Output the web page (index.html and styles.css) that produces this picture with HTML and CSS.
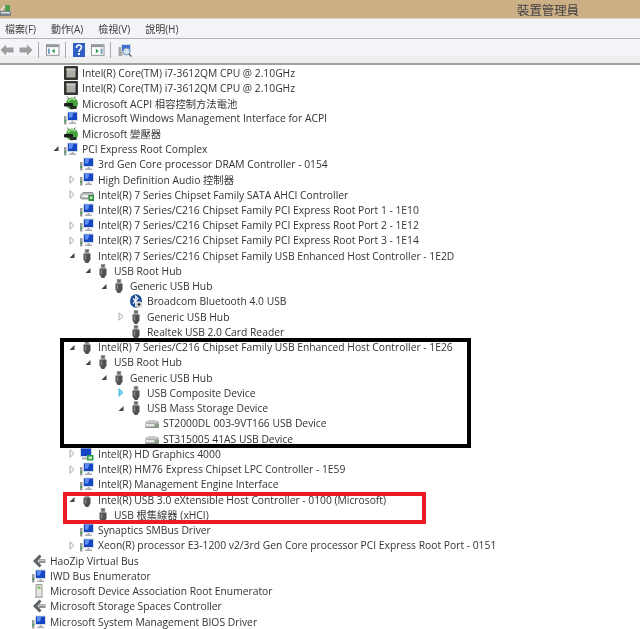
FILE: index.html
```html
<!DOCTYPE html>
<html lang="zh-Hant">
<head>
  <meta charset="UTF-8">
  <title>裝置管理員</title>
  <link rel="stylesheet" href="styles.css">
</head>
<body>

  <svg class="defs" width="0" height="0">
    <symbol id="cpu" viewBox="0 0 14 14">
      <rect x="0" y="0" width="14" height="14" rx="1" fill="#333"/>
      <rect x="2.500" y="2.500" width="9" height="9" fill="#adaea6"/>
      <path d="M2.500 2.500h9v2h-9z" fill="#c8c9c2"/>
    </symbol>
    <symbol id="modem" viewBox="0 0 14 14">
      <path d="M3 0.500l3 3.500M11.500 0.500L8.500 4" stroke="#666" fill="none"/>
      <circle cx="8" cy="7.500" r="6" fill="#43a33a"/>
      <path d="M4 5.500a4.500 4.500 0 0 1 7-1.500" stroke="#c2ecb0" stroke-width="1.200" fill="none"/>
      <rect x="0" y="7" width="9" height="3.500" rx="1" fill="#1c1c1c"/>
      <rect x="6" y="10" width="6.500" height="3" fill="#2a2a2a"/>
    </symbol>
    <symbol id="pc" viewBox="0 0 14 14">
      <rect x="0" y="5" width="2.500" height="8.500" fill="#9a9f9c"/>
      <rect x="0.500" y="9" width="1.500" height="2" fill="#3c9c4c"/>
      <rect x="3" y="0.500" width="11" height="9.500" fill="#d5dbe4"/>
      <rect x="4" y="1.500" width="9" height="7.500" fill="#1546c4"/>
      <path d="M5 1.500h4.500L8 6.500H5z" fill="#5f8df0"/>
      <path d="M7.500 10h2v1.500h2.500V13H5v-1.500h2.500z" fill="#a9adb2"/>
    </symbol>
    <symbol id="gpu" viewBox="0 0 14 14">
      <rect x="0" y="0.500" width="12" height="9.500" fill="#d5dbe4"/>
      <rect x="1" y="1.500" width="10" height="7.500" fill="#1546c4"/>
      <rect x="7" y="8" width="6.500" height="5.500" fill="#2f9a48"/>
      <rect x="8.500" y="9.500" width="3.500" height="2.500" fill="#c9e7c0"/>
      <rect x="2" y="10.500" width="5" height="2" fill="#a9adb2"/>
    </symbol>
    <symbol id="sata" viewBox="0 0 14 14">
      <path d="M1 6.500l2-2h9.500l1 2v3.500l-1 1H1.500L0.500 10z" fill="#b9bcbc" stroke="#6e7272" stroke-width="0.700"/>
      <rect x="2" y="7" width="6" height="2" fill="#f2f2f2"/>
      <rect x="8.500" y="7" width="5.500" height="6" fill="#2f8f3f"/>
      <rect x="10" y="8.500" width="2.500" height="2.500" fill="#cfe8c8"/>
    </symbol>
    <symbol id="usb" viewBox="0 0 14 14">
      <rect x="4.800" y="0" width="4.400" height="4.500" fill="#96989a"/>
      <rect x="5.800" y="1.200" width="0.900" height="1.600" fill="#444"/>
      <rect x="7.300" y="1.200" width="0.900" height="1.600" fill="#444"/>
      <path d="M3.500 4.500h7v6L8.300 14H5.700l-2.200-3.500z" fill="#4e5052"/>
      <path d="M4.800 5.500h1.500v5H4.800z" fill="#85878a"/>
    </symbol>
    <symbol id="bt" viewBox="0 0 14 14">
      <ellipse cx="7" cy="7" rx="6" ry="6.800" fill="#1c4f96"/>
      <path d="M4 4.500l5 5-2.300 2.300V2.200L9 4.500l-5 5" stroke="#fff" stroke-width="1.100" fill="none"/>
      <circle cx="10" cy="10.500" r="3.200" fill="#d8d8d8"/>
      <circle cx="10" cy="10.500" r="1.300" fill="#222"/>
    </symbol>
    <symbol id="disk" viewBox="0 0 14 14">
      <path d="M0.500 5.500C3 3.500 11 3.500 14 5.500v6.500H0.500z" fill="#c4c6c6"/>
      <path d="M0.500 7.500H14v4.500H0.500z" fill="#8f9191"/>
      <rect x="1" y="8" width="8.500" height="2.500" fill="#e8e8e8"/>
      <rect x="11" y="8.500" width="1.500" height="1.500" fill="#6fbf63"/>
    </symbol>
    <symbol id="bus" viewBox="0 0 14 14">
      <path d="M7.500 0.500L1 7l6.500 6.500 2-2L5.500 7l4-4.500z" fill="#5c6166"/>
      <path d="M7 5h6.500v4H7z" fill="#8d9296"/>
      <path d="M5.500 7l2-1.500h6V7z" fill="#c2c6c9"/>
    </symbol>
    <symbol id="slab" viewBox="0 0 14 14">
      <path d="M4 0.500h6v13H4z" fill="#e6e6e2" stroke="#9a9c98"/>
      <rect x="5.500" y="2" width="3" height="3" fill="#8fc47e"/>
      <rect x="3" y="12" width="8" height="2" fill="#b9bab6"/>
    </symbol>
    <symbol id="opened" viewBox="0 0 6 6">
      <path d="M5.500 0.500v5h-5z" fill="#444"/>
    </symbol>
    <symbol id="closed" viewBox="0 0 6 9">
      <path d="M1 0.800l4 3.700-4 3.700z" fill="#fff" stroke="#a8a8a8"/>
    </symbol>
    <symbol id="picked" viewBox="0 0 6 9">
      <path d="M1 0.800l4 3.700-4 3.700z" fill="#7fdcf5" stroke="#3db4e0"/>
    </symbol>
  </svg>

  <div class="titlebar">
    <svg class="app-icon" viewBox="0 0 12 14">
      <rect x="0" y="8" width="11" height="5" fill="#7a8088"/>
      <rect x="1" y="9" width="9" height="1.500" fill="#dfe2e6"/>
      <rect x="5" y="2" width="5" height="6" fill="#4f9d50"/>
      <path d="M1 7l4-4" stroke="#e8e8e8" stroke-width="1.500"/>
    </svg>
    <div class="window-name">裝置管理員</div>
  </div>

  <div class="menubar">
    <span class="menu-item">檔案(F)</span>
    <span class="menu-item">動作(A)</span>
    <span class="menu-item">檢視(V)</span>
    <span class="menu-item">說明(H)</span>
  </div>

  <div class="toolbar">
    <svg class="tool nav" viewBox="0 0 14 12"><path d="M0.500 6L6 0.500v3h7.500v5H6v3z" fill="#9d9f9f"/></svg>
    <svg class="tool nav" viewBox="0 0 14 12"><path d="M13.500 6L8 0.500v3H0.500v5H8v3z" fill="#9d9f9f"/></svg>
    <span class="tool-sep"></span>
    <svg class="tool panel" viewBox="0 0 14 12">
      <rect x="0.500" y="0.500" width="13" height="11" fill="#fff" stroke="#8d9094"/>
      <rect x="1" y="1" width="12" height="2" fill="#8d9094"/>
      <rect x="2" y="4.500" width="2" height="5.500" fill="#7a9cc0"/>
      <path d="M9 4.500v5L6 7z" fill="#2f9a58"/>
    </svg>
    <span class="tool-sep"></span>
    <svg class="tool help" viewBox="0 0 12 14">
      <rect width="12" height="14" fill="#2f5fc4"/>
      <path d="M3.500 5c0-4 5-4 5-0.500 0 2-2.500 2-2.500 4.500" stroke="#fff" stroke-width="1.600" fill="none"/>
      <rect x="5" y="10" width="2" height="2" fill="#fff"/>
    </svg>
    <svg class="tool panel" viewBox="0 0 14 12">
      <rect x="0.500" y="0.500" width="13" height="11" fill="#fff" stroke="#8d9094"/>
      <rect x="1" y="1" width="12" height="2" fill="#8d9094"/>
      <path d="M5 4.500v5L8 7z" fill="#2f9a58"/>
      <rect x="10" y="4.500" width="2" height="5.500" fill="#7a9cc0"/>
    </svg>
    <span class="tool-sep"></span>
    <svg class="tool scan" viewBox="0 0 14 14">
      <rect x="0.500" y="4" width="4" height="9" fill="#a4a6a6"/>
      <rect x="3" y="1" width="10" height="8" fill="#cdd6e2"/>
      <rect x="4" y="2" width="8" height="6" fill="#3f6fd0"/>
      <circle cx="8.500" cy="8.500" r="3.500" fill="#d8e2ee" stroke="#6f8fb8"/>
      <path d="M11 11l2.500 2.500" stroke="#555" stroke-width="1.300"/>
    </svg>
  </div>

  <div class="tree">
    <div class="row lv2"><span class="arrow"></span><svg class="ico"><use href="#cpu"/></svg><span>Intel(R) Core(TM) i7-3612QM CPU @ 2.10GHz</span></div>
    <div class="row lv2"><span class="arrow"></span><svg class="ico"><use href="#cpu"/></svg><span>Intel(R) Core(TM) i7-3612QM CPU @ 2.10GHz</span></div>
    <div class="row lv2"><span class="arrow"></span><svg class="ico"><use href="#modem"/></svg><span>Microsoft ACPI 相容控制方法電池</span></div>
    <div class="row lv2"><span class="arrow"></span><svg class="ico"><use href="#pc"/></svg><span>Microsoft Windows Management Interface for ACPI</span></div>
    <div class="row lv2"><span class="arrow"></span><svg class="ico"><use href="#modem"/></svg><span>Microsoft 變壓器</span></div>
    <div class="row lv2"><svg class="arrow"><use href="#opened"/></svg><svg class="ico"><use href="#pc"/></svg><span>PCI Express Root Complex</span></div>
    <div class="row lv3"><span class="arrow"></span><svg class="ico"><use href="#pc"/></svg><span>3rd Gen Core processor DRAM Controller - 0154</span></div>
    <div class="row lv3"><svg class="arrow"><use href="#closed"/></svg><svg class="ico"><use href="#pc"/></svg><span>High Definition Audio 控制器</span></div>
    <div class="row lv3"><svg class="arrow"><use href="#closed"/></svg><svg class="ico"><use href="#sata"/></svg><span>Intel(R) 7 Series Chipset Family SATA AHCI Controller</span></div>
    <div class="row lv3"><span class="arrow"></span><svg class="ico"><use href="#pc"/></svg><span>Intel(R) 7 Series/C216 Chipset Family PCI Express Root Port 1 - 1E10</span></div>
    <div class="row lv3"><svg class="arrow"><use href="#closed"/></svg><svg class="ico"><use href="#pc"/></svg><span>Intel(R) 7 Series/C216 Chipset Family PCI Express Root Port 2 - 1E12</span></div>
    <div class="row lv3"><svg class="arrow"><use href="#closed"/></svg><svg class="ico"><use href="#pc"/></svg><span>Intel(R) 7 Series/C216 Chipset Family PCI Express Root Port 3 - 1E14</span></div>
    <div class="row lv3"><svg class="arrow"><use href="#opened"/></svg><svg class="ico"><use href="#usb"/></svg><span>Intel(R) 7 Series/C216 Chipset Family USB Enhanced Host Controller - 1E2D</span></div>
    <div class="row lv4"><svg class="arrow"><use href="#opened"/></svg><svg class="ico"><use href="#usb"/></svg><span>USB Root Hub</span></div>
    <div class="row lv5"><svg class="arrow"><use href="#opened"/></svg><svg class="ico"><use href="#usb"/></svg><span>Generic USB Hub</span></div>
    <div class="row lv6"><span class="arrow"></span><svg class="ico"><use href="#bt"/></svg><span>Broadcom Bluetooth 4.0 USB</span></div>
    <div class="row lv6"><svg class="arrow"><use href="#closed"/></svg><svg class="ico"><use href="#usb"/></svg><span>Generic USB Hub</span></div>
    <div class="row lv6"><span class="arrow"></span><svg class="ico"><use href="#usb"/></svg><span>Realtek USB 2.0 Card Reader</span></div>
    <div class="row lv3"><svg class="arrow"><use href="#opened"/></svg><svg class="ico"><use href="#usb"/></svg><span>Intel(R) 7 Series/C216 Chipset Family USB Enhanced Host Controller - 1E26</span></div>
    <div class="row lv4"><svg class="arrow"><use href="#opened"/></svg><svg class="ico"><use href="#usb"/></svg><span>USB Root Hub</span></div>
    <div class="row lv5"><svg class="arrow"><use href="#opened"/></svg><svg class="ico"><use href="#usb"/></svg><span>Generic USB Hub</span></div>
    <div class="row lv6"><svg class="arrow"><use href="#picked"/></svg><svg class="ico"><use href="#usb"/></svg><span>USB Composite Device</span></div>
    <div class="row lv6"><svg class="arrow"><use href="#opened"/></svg><svg class="ico"><use href="#usb"/></svg><span>USB Mass Storage Device</span></div>
    <div class="row lv7"><span class="arrow"></span><svg class="ico"><use href="#disk"/></svg><span>ST2000DL 003-9VT166 USB Device</span></div>
    <div class="row lv7"><span class="arrow"></span><svg class="ico"><use href="#disk"/></svg><span>ST315005 41AS USB Device</span></div>
    <div class="row lv3"><svg class="arrow"><use href="#closed"/></svg><svg class="ico"><use href="#gpu"/></svg><span>Intel(R) HD Graphics 4000</span></div>
    <div class="row lv3"><svg class="arrow"><use href="#closed"/></svg><svg class="ico"><use href="#pc"/></svg><span>Intel(R) HM76 Express Chipset LPC Controller - 1E59</span></div>
    <div class="row lv3"><span class="arrow"></span><svg class="ico"><use href="#pc"/></svg><span>Intel(R) Management Engine Interface</span></div>
    <div class="row lv3"><svg class="arrow"><use href="#opened"/></svg><svg class="ico"><use href="#usb"/></svg><span>Intel(R) USB 3.0 eXtensible Host Controller - 0100 (Microsoft)</span></div>
    <div class="row lv4"><span class="arrow"></span><svg class="ico"><use href="#usb"/></svg><span>USB 根集線器 (xHCI)</span></div>
    <div class="row lv3"><span class="arrow"></span><svg class="ico"><use href="#pc"/></svg><span>Synaptics SMBus Driver</span></div>
    <div class="row lv3"><svg class="arrow"><use href="#closed"/></svg><svg class="ico"><use href="#pc"/></svg><span>Xeon(R) processor E3-1200 v2/3rd Gen Core processor PCI Express Root Port - 0151</span></div>
    <div class="row lv0"><span class="arrow"></span><svg class="ico"><use href="#bus"/></svg><span>HaoZip Virtual Bus</span></div>
    <div class="row lv0"><span class="arrow"></span><svg class="ico"><use href="#pc"/></svg><span>IWD Bus Enumerator</span></div>
    <div class="row lv0"><span class="arrow"></span><svg class="ico"><use href="#slab"/></svg><span>Microsoft Device Association Root Enumerator</span></div>
    <div class="row lv0"><span class="arrow"></span><svg class="ico"><use href="#bus"/></svg><span>Microsoft Storage Spaces Controller</span></div>
    <div class="row lv0"><span class="arrow"></span><svg class="ico"><use href="#pc"/></svg><span>Microsoft System Management BIOS Driver</span></div>

    <div class="mark mark-black"></div>
    <div class="mark mark-red"></div>
  </div>

</body>
</html>
```

FILE: styles.css
```css
* {
  box-sizing: border-box;
  margin: 0;
  padding: 0;
}

body {
  width: 640px;
  height: 629px;
  overflow: hidden;
  background-color: #fff;
  color: #333;
  font-family: "Open Sans", "Noto Sans CJK TC", sans-serif;
}

.defs {
  display: block;
  height: 0;
}

.titlebar {
  height: 19px;
  background-color: #ccaf85;
  border-bottom: 1px solid #ddd2bf;
  display: flex;
  align-items: center;
  justify-content: space-between;
  padding: 1px 61px 0 0;
}

.app-icon {
  width: 12px;
  height: 14px;
  margin-top: 1px;
  filter: blur(0.3px);
}

.window-name {
  font-size: 12.4px;
  color: #444;
  filter: blur(0.3px);
}

.menubar {
  height: 20px;
  background-color: #f4f5f8;
  border-bottom: 1px solid #b4b4b8;
  display: flex;
  align-items: center;
  gap: 15px;
  padding-left: 5px;
  font-size: 10px;
  color: #3c3c3c;
}

.menu-item {
  filter: blur(0.3px);
}

.toolbar {
  height: 26px;
  background: linear-gradient(#f4f5f8 70%, #eeeef0 70%);
  border-bottom: 2px solid #a2a2a4;
  display: flex;
  align-items: center;
  padding-bottom: 3px;
}

.tool {
  flex: none;
  filter: blur(0.3px);
}

.nav {
  width: 14px;
  height: 12px;
  margin-right: 5px;
}

.panel {
  width: 13.5px;
  height: 12px;
  margin-right: 5px;
}

.help {
  width: 12px;
  height: 14px;
  margin: 0 6px 0 0.5px;
}

.scan {
  width: 14px;
  height: 14px;
}

.tool-sep {
  width: 1px;
  height: 16px;
  background-color: #a8a8aa;
  margin-right: 7px;
}

.tree {
  position: relative;
  font-size: 10.3px;
  height: 564px;
}

.row {
  height: 15.25px;
  display: flex;
  align-items: center;
  white-space: nowrap;
  filter: blur(0.3px);
}

.arrow {
  display: block;
  flex: none;
  width: 6px;
  height: 9px;
  margin-right: 5px;
}

.ico {
  flex: none;
  width: 14px;
  height: 14px;
  margin-right: 4px;
}

.lv0 { padding-left: 21px; }
.lv2 { padding-left: 53px; }
.lv3 { padding-left: 69px; }
.lv4 { padding-left: 85px; }
.lv5 { padding-left: 101px; }
.lv6 { padding-left: 118px; }
.lv7 { padding-left: 134px; }

.mark {
  position: absolute;
  pointer-events: none;
}

.mark-black {
  left: 60px;
  top: 273px;
  width: 411px;
  height: 110px;
  border: 4px solid #000;
}

.mark-red {
  left: 63px;
  top: 427px;
  width: 363px;
  height: 32px;
  border: 4px solid #ed1c24;
}
```
